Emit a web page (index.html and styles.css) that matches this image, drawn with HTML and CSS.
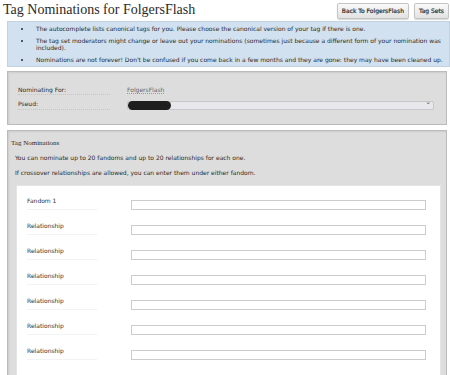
FILE: index.html
```html
<!DOCTYPE html>
<html lang="en">
<head>
    <meta charset="UTF-8">
    <title>Tag Nominations for FolgersFlash</title>
    <link rel="stylesheet" href="styles.css">
</head>
<body>
    <div class="header">
        <h2 class="heading">Tag Nominations for FolgersFlash</h2>
        <ul class="actions">
            <li><a href="#">Back To FolgersFlash</a></li>
            <li><a href="#">Tag Sets</a></li>
        </ul>
    </div>

    <!-- notice -->
    <div class="notice">
        <ul>
            <li>The autocomplete lists canonical tags for you. Please choose the canonical version of your tag if there is one.</li>
            <li>The tag set moderators might change or leave out your nominations (sometimes just because a different form of your nomination was included).</li>
            <li>Nominations are not forever! Don't be confused if you come back in a few months and they are gone: they may have been cleaned up.</li>
        </ul>
    </div>

    <form>
        <fieldset class="box">
            <dl class="meta">
                <dt>Nominating For:</dt>
                <dd><span class="set-name">FolgersFlash</span></dd>
                <dt>Pseud:</dt>
                <dd>
                    <div class="pseud">
                        <select><option></option></select>
                        <span class="redacted"></span>
                        <span class="arrow">&#8964;</span>
                    </div>
                </dd>
            </dl>
        </fieldset>

        <fieldset class="box tags">
            <h3 class="legend">Tag Nominations</h3>
            <p>You can nominate up to 20 fandoms and up to 20 relationships for each one.</p>
            <p>If crossover relationships are allowed, you can enter them under either fandom.</p>
            <div class="inner">
                <dl class="rows">
                    <dt>Fandom 1</dt><dd><input type="text"></dd>
                    <dt>Relationship</dt><dd><input type="text"></dd>
                    <dt>Relationship</dt><dd><input type="text"></dd>
                    <dt>Relationship</dt><dd><input type="text"></dd>
                    <dt>Relationship</dt><dd><input type="text"></dd>
                    <dt>Relationship</dt><dd><input type="text"></dd>
                    <dt>Relationship</dt><dd><input type="text"></dd>
                </dl>
            </div>
        </fieldset>
    </form>
</body>
</html>
```

FILE: styles.css
```css
body {
    margin: 0;
    padding: 0 1px 0 3px;
    background: #fff;
    color: #2a2a2a;
    font-family: "DejaVu Sans", "Liberation Sans", sans-serif;
    font-size: 6px;
    overflow: hidden;
}
.header {
    display: flex;
    justify-content: space-between;
    align-items: flex-start;
    height: 21px;
}
.heading {
    margin: 0;
    font-family: "Liberation Serif", serif;
    font-weight: normal;
    font-size: 14px;
    line-height: 20px;
    color: #2a2a2a;
}
.actions {
    list-style: none;
    margin: 3px 0 0;
    padding: 0;
    display: flex;
    gap: 5px;
}
.actions a {
    display: block;
    padding: 3px 4px;
    border: 1px solid #c4c4c4;
    border-radius: 2px;
    background: linear-gradient(#fafafa, #e2e2e2);
    color: #2a2a2a;
    text-decoration: none;
    font-size: 6px;
    line-height: 8px;
    box-shadow: 0 1px 1px #d8d8d8;
    -webkit-text-stroke: 0.2px #2a2a2a;
}
.notice {
    margin: 0 -1px 0 4px;
    background: #d1e1ef;
    border: 1px solid #c2d2e1;
    padding: 3px 0 3px;
}
.notice ul {
    margin: 0;
    padding: 0 0 0 24px;
}
.notice li {
    margin: 0 0 5px;
    line-height: 7px;
    padding-left: 4px;
}
.notice li:last-child {
    margin-bottom: 0;
}
form {
    margin: 4px 2px 0 4px;
}
.box {
    margin: 0 0 5px;
    padding: 0;
    border: 1px solid #bbb;
    background: #ddd;
    box-shadow: inset 1px 1px 2px #ccc;
}
.meta {
    display: grid;
    grid-template-columns: 109px 1fr;
    margin: 13px 12px 14px 10px;
    row-gap: 4px;
    line-height: 9px;
}
.meta dt {
    margin: 0;
    width: 92px;
    border-bottom: 1px dotted #c4c4c4;
}
.meta dd {
    margin: 0;
}
.set-name {
    color: #666;
    border-bottom: 1px dotted #999;
}
.pseud {
    position: relative;
    margin-top: 2px;
}
.pseud select {
    display: block;
    width: 100%;
    height: 9px;
    font-size: 5px;
    border: 1px solid #c8c8c8;
    border-radius: 2px;
    background: #e8e8ec;
    padding: 0;
    appearance: none;
    -webkit-appearance: none;
}
.redacted {
    position: absolute;
    left: 1px;
    top: 0;
    width: 43px;
    height: 9px;
    border-radius: 5px;
    background: #1e1e1e;
}
.arrow {
    position: absolute;
    right: 3px;
    top: -3px;
    font-size: 7px;
    line-height: 9px;
    color: #555;
}
.legend {
    margin: 8px 0 0 3px;
    font-family: "Liberation Serif", serif;
    font-weight: normal;
    font-size: 7px;
    line-height: 8px;
}
.tags p {
    margin: 6px 0 0 7px;
    line-height: 9px;
}
.inner {
    margin: 8px 5px 0 8px;
    background: #fff;
    border: 1px solid #e4e4e4;
    padding: 10px 0 20px;
}
.rows {
    display: grid;
    grid-template-columns: 104px 1fr;
    margin: 0 14px 0 10px;
    row-gap: 11px;
}
.rows dt {
    margin: 0;
    width: 70px;
    line-height: 10px;
    border-bottom: 1px solid #f3f3f3;
    color: #333;
}
.rows dd {
    margin: 4px 0 0;
}
.rows input {
    display: block;
    width: 100%;
    box-sizing: border-box;
    height: 10px;
    border: 1px solid #ccc;
    padding: 0;
}
```
